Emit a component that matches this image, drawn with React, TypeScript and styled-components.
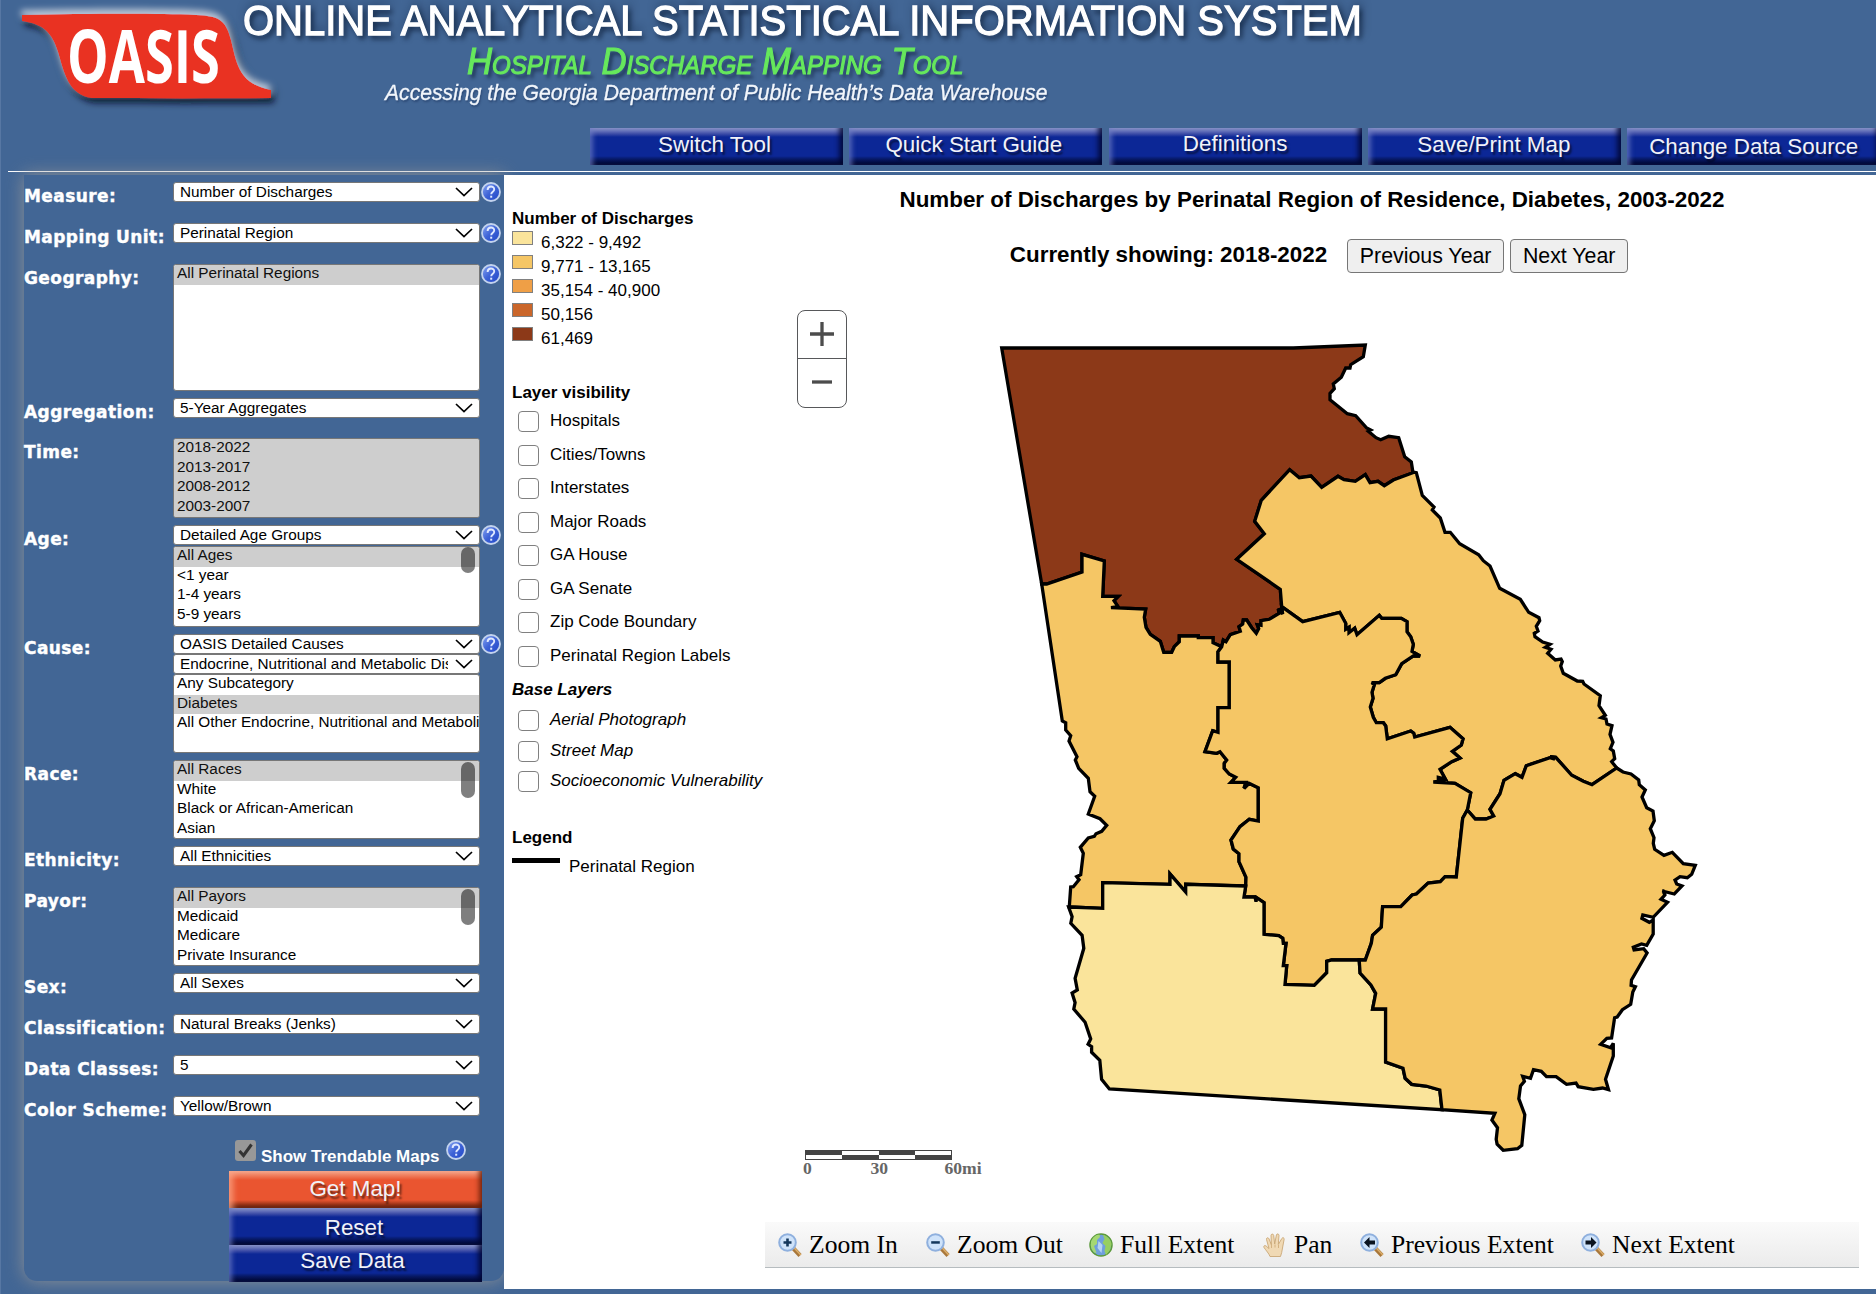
import React from 'react';
import styled, { createGlobalStyle, css } from 'styled-components';

const SANS = '"Liberation Sans", Arial, sans-serif';
const SERIF = '"Liberation Serif", "Times New Roman", serif';
const BLUE = '#426695';

const GlobalStyle = createGlobalStyle`
  *, *::before, *::after { box-sizing: border-box; }
  body { margin: 0; background: ${BLUE}; font-family: ${SANS}; color: #000; }
`;

const Page = styled.div`
  width: 1876px;
  height: 1294px;
  overflow: hidden;
  display: flex;
  flex-direction: column;
  background: ${BLUE};
  border-left: 1px solid #5777a3;
`;

/* ---------- header ---------- */

const Header = styled.header`
  height: 175px;
  flex: none;
  display: flex;
  flex-direction: column;
`;

const Brand = styled.div`
  height: 128px;
  display: flex;
`;

const Logo = styled.svg`
  width: 242px;
  height: 128px;
  flex: none;
  overflow: visible;
`;

const Titles = styled.div`
  display: flex;
  flex-direction: column;
  white-space: nowrap;
`;

const TitleLine = styled.div<{ $scale: number }>`
  transform: scaleX(${(p) => p.$scale});
  transform-origin: 0 0;
`;

const MainTitle = styled(TitleLine)`
  height: 41px;
  font-size: 43.3px;
  line-height: 41px;
  color: #fff;
  -webkit-text-stroke: 1.3px #fff;
  text-shadow: 3px 4px 6px rgba(10, 25, 50, 0.75), 2px -3px 10px rgba(10, 25, 50, 0.5);
`;

const SubTitle = styled(TitleLine)`
  height: 40px;
  margin-left: 224px;
  font-size: 36px;
  line-height: 41px;
  font-style: italic;
  font-variant: small-caps;
  color: #66e85c;
  -webkit-text-stroke: 1.1px #66e85c;
  text-shadow: 3px 4px 4px rgba(10, 25, 50, 0.7);
`;

const Tagline = styled(TitleLine)`
  height: 24px;
  margin-left: 142px;
  font-size: 21.5px;
  line-height: 25px;
  font-style: italic;
  color: #f2f6fb;
  -webkit-text-stroke: 0.3px #f2f6fb;
  text-shadow: 1px 2px 2px rgba(20, 40, 80, 0.5);
`;

const Nav = styled.nav`
  height: 43px;
  padding-left: 589px;
  display: flex;
  gap: 6.3px;
`;

const BevelButton = styled.button<{ $tone?: 'red'; $lift?: number; $left?: number }>`
  flex: none;
  display: flex;
  justify-content: center;
  align-items: flex-start;
  width: 253px;
  height: 37px;
  padding: 0 ${(p) => p.$left ?? 0}px 0 0;
  border: 0;
  font: 22.4px/${(p) => 35 - 2 * (p.$lift ?? 0)}px ${SANS};
  color: #f1f2f8;
  text-shadow: 2px 3px 2px rgba(0, 0, 0, 0.55);
  background: linear-gradient(#8c96cc 0, #6572ba 3px, #3a4aa6 6px, #0c2796 9px, #0c2796 28px, #081b6c 31px, #020a3a 37px);
  box-shadow: inset 6px 0 5px -3px rgba(110, 125, 195, 0.7), inset -5px -3px 5px -1px rgba(0, 5, 45, 0.8);
  ${(p) =>
    p.$tone === 'red' &&
    css`
      background: linear-gradient(#f5a98f 0, #f08262 4px, #ea5530 9px, #ea5530 29px, #a93a1c 33px, #64200e 37px);
      box-shadow: inset 8px 0 6px -4px rgba(250, 165, 135, 0.8), inset -5px -3px 5px -2px rgba(90, 25, 5, 0.8);
    `}
`;

const Rule = styled.div`
  height: 1px;
  margin-left: 7px;
  background: #fff;
`;

/* ---------- body ---------- */

const Body = styled.div`
  flex: none;
  display: flex;
  align-items: flex-start;
  height: 1119px;
`;

const Sidebar = styled.aside`
  flex: none;
  width: 480px;
  height: 1106px;
  margin-left: 23px;
  padding-top: 7px;
  border-radius: 0 0 13px 13px;
  background: ${BLUE};
  box-shadow: 0 0 18px rgba(150, 150, 150, 0.9);
  display: flex;
  flex-direction: column;
`;

const Field = styled.div<{ $height: number }>`
  display: grid;
  grid-template-columns: 149px 307px 22px;
  align-items: start;
  flex: none;
  height: ${(p) => p.$height}px;
`;

const Label = styled.label`
  padding-top: 5px;
  font: bold 17px/19px "DejaVu Sans", Verdana, sans-serif;
  letter-spacing: 0.42px;
  -webkit-text-stroke: 0.4px #fff;
  color: #fff;
  white-space: nowrap;
`;

const Controls = styled.div<{ $gap: number }>`
  display: flex;
  flex-direction: column;
  gap: ${(p) => p.$gap}px;
  min-width: 0;
`;

const Select = styled.div`
  display: flex;
  align-items: center;
  height: 20px;
  padding: 0 6px 0 6px;
  border: 1px solid #777;
  border-radius: 3px;
  background: #fff;
  font-size: 15.33px;
  line-height: 18px;
`;

const SelectText = styled.span`
  flex: 1;
  overflow: hidden;
  white-space: nowrap;
  margin-right: 7px;
`;

const List = styled.div<{ $height: number; $fill?: boolean }>`
  position: relative;
  height: ${(p) => p.$height}px;
  overflow: hidden;
  border: 1px solid #777;
  border-radius: 3px;
  background: ${(p) => (p.$fill ? '#cecece' : '#fff')};
`;

const Option = styled.div<{ $on?: boolean }>`
  height: 19.5px;
  padding-left: 3px;
  font-size: 15.33px;
  line-height: 16px;
  white-space: nowrap;
  color: ${(p) => (p.$on ? '#101010' : '#000')};
  background: ${(p) => (p.$on ? '#cecece' : 'transparent')};
`;

const Thumb = styled.div<{ $top: number; $height: number }>`
  position: absolute;
  right: 4px;
  top: ${(p) => p.$top}px;
  width: 14px;
  height: ${(p) => p.$height}px;
  border-radius: 7px;
  background: rgba(0, 0, 0, 0.5);
`;

const HelpSvg = styled.svg`
  width: 20px;
  height: 20px;
  margin-left: 1px;
  display: block;
`;

const TrendRow = styled.div`
  display: flex;
  align-items: flex-start;
  flex: none;
  height: 35px;
  padding-left: 211px;
`;

const TrendBox = styled.svg`
  width: 21px;
  height: 21px;
  margin-top: 4px;
`;

const TrendLabel = styled.span`
  margin: 10px 5px 0 5px;
  font: bold 17px/21px ${SANS};
  color: #fff;
`;

const TrendHelp = styled.div`
  margin-top: 4px;
`;

const Actions = styled.div`
  display: flex;
  flex-direction: column;
  padding-left: 205px;
`;

const Main = styled.main`
  flex: none;
  width: 1372px;
  height: 1114px;
  background: #fff;
  display: flex;
  position: relative;
`;

/* ---------- legend column ---------- */

const LegendColumn = styled.section`
  flex: none;
  width: 261px;
  padding: 33px 0 0 8px;
  display: flex;
  flex-direction: column;
  font-size: 17px;
  line-height: 20px;
  white-space: nowrap;
`;

const Heading = styled.h3<{ $top?: number; $italic?: boolean }>`
  margin: ${(p) => p.$top ?? 0}px 0 0;
  height: 20px;
  font-size: 17px;
  line-height: 22px;
  font-style: ${(p) => (p.$italic ? 'italic' : 'normal')};
`;

const ClassRow = styled.div`
  display: flex;
  height: 24px;
  padding-top: 3px;
`;

const Swatch = styled.span<{ $color: string }>`
  width: 21px;
  height: 14px;
  margin-right: 8px;
  border: 1px solid #808080;
  background: ${(p) => p.$color};
`;

const ClassText = styled.span`
  padding-top: 1px;
  line-height: 22px;
`;

const Layers = styled.div<{ $pitch: number; $top: number; $italic?: boolean }>`
  display: grid;
  grid-auto-rows: ${(p) => p.$pitch}px;
  margin-top: ${(p) => p.$top}px;
  padding-left: 6px;
  font-style: ${(p) => (p.$italic ? 'italic' : 'normal')};
`;

const LayerRow = styled.label`
  display: flex;
  align-items: flex-start;
  line-height: 20px;
`;

const Check = styled.span`
  width: 21px;
  height: 21px;
  margin-right: 11px;
  border: 1.4px solid #808080;
  border-radius: 4px;
  background: #fff;
`;

const LineRow = styled.div`
  display: flex;
  align-items: flex-start;
  gap: 9px;
  margin-top: 10px;
`;

const LineSample = styled.span`
  width: 48px;
  height: 5px;
  margin-top: 1px;
  background: #000;
`;

/* ---------- map column ---------- */

const MapColumn = styled.section`
  flex: none;
  width: 1094px;
  display: flex;
  flex-direction: column;
  align-items: center;
`;

const MapTitle = styled.h2`
  margin: 12px 0 0;
  font-size: 22.4px;
  line-height: 26px;
  white-space: nowrap;
`;

const YearRow = styled.div`
  display: flex;
  align-items: center;
  height: 34px;
  margin-top: 26px;
  padding-left: 20px;
`;

const YearLabel = styled.span`
  margin-right: 20px;
  font: bold 22.4px/30px ${SANS};
  padding-bottom: 2px;
  white-space: nowrap;
`;

const YearButton = styled.button<{ $width: number }>`
  width: ${(p) => p.$width}px;
  height: 34px;
  margin-right: 6px;
  padding: 0;
  border: 1px solid #767676;
  border-radius: 4px;
  background: #efefef;
  color: #000;
  font: 21.33px/30px ${SANS};
  white-space: nowrap;
`;

const MapCanvas = styled.div`
  position: relative;
  width: 1094px;
  height: 949px;
  flex: none;
`;

const MapSvg = styled.svg`
  display: block;
  width: 1094px;
  height: 949px;
`;

const ZoomControl = styled.div`
  position: absolute;
  left: 32px;
  top: 37px;
  width: 50px;
  height: 98px;
  border: 1px solid #57585a;
  border-radius: 8px;
  background: #fff;
  display: flex;
  flex-direction: column;
`;

const ZoomButton = styled.div<{ $divided?: boolean }>`
  height: ${(p) => (p.$divided ? 48 : 47)}px;
  padding-bottom: 2px;
  padding-right: 1px;
  display: flex;
  align-items: center;
  justify-content: center;
  border-bottom: ${(p) => (p.$divided ? '1px solid #57585a' : '0')};
`;

const ScaleBar = styled.div`
  position: absolute;
  left: 40px;
  top: 877px;
  width: 180px;
`;

const ScaleCells = styled.div`
  display: grid;
  grid-template-columns: repeat(4, 1fr);
  grid-auto-rows: 4px;
  width: 147px;
  border: 1px solid #444;
`;

const ScaleCell = styled.span<{ $dark: boolean }>`
  background: ${(p) => (p.$dark ? '#444' : '#fff')};
`;

const ScaleLabels = styled.div`
  display: grid;
  grid-template-columns: 67.5px 74px auto;
  margin: -1px 0 0 -2px;
  font: bold 17.6px/19px ${SERIF};
  color: #666;
`;

const Toolbar = styled.div`
  width: 1094px;
  height: 46px;
  padding-left: 13px;
  display: flex;
  align-items: center;
  background: linear-gradient(#fafafa, #ebebeb);
  border-bottom: 1px solid #b6bcbf;
  font: 25.6px/44px ${SERIF};
`;

const Tool = styled.div<{ $width: number }>`
  width: ${(p) => p.$width}px;
  display: flex;
  align-items: center;
  gap: 7px;
  white-space: nowrap;
`;

const ToolSvg = styled.svg`
  flex: none;
  width: 24px;
  height: 24px;
`;

/* ---------- map geometry: shared arcs, each with its own quantisation ---------- */

type Arc = { t: [number, number, number, number]; p: string };
const TN: Arc['t'] = [980, 330, 3, 3];
const TE: Arc['t'] = [1200, 450, 3, 3];
const TW: Arc['t'] = [1040, 540, 3, 3];
const TS: Arc['t'] = [1040, 860, 1568 / 680, 3];

const arcs: Record<string, Arc[]> = {
  north: [{ t: TN, p: '185,762 65,54 940,54 1156,45 1150,80 1112,104 1110,114 1097,114 1084,142 1060,162 1063,176 1050,190 1050,209 1102,251 1127,257 1160,294 1172,300 1165,304 1188,323 1202,329 1226,319 1256,323 1274,380 1294,396 1299,428' }],
  northEast: [{ t: TN, p: '1299,428 1240,450 1213,467 1194,454 1170,458 1156,434 1126,454 1092,449 1074,439 1025,472 993,438 958,443 929,419 844,511 824,574 853,611 770,688 901,778 905,830' }],
  northCentral: [{ t: TN, p: '905,830 908,852 895,836 897,850 868,868 843,872 843,886 832,884 836,896 829,910 815,893 800,870 790,870 788,882 777,890 781,904 751,914 738,935 730,930 725,950' }],
  northWest: [{ t: TN, p: '725,950 699,938 699,923 655,923 655,918 598,918 598,935 583,950 575,967 551,967 541,934 511,913 498,892 493,862 497,837 393,833 414,830 402,812 415,799 368,799 373,693 306,673 306,726 200,762 185,762' }],
  eastCentral: [{ t: TE, p: '245,470 308,515 419,487 437,520 437,538 447,532 447,548 464,535 471,554 538,496 545,505 604,505 621,515 621,545 632,560 640,583 636,604 660,618 640,618 605,641 587,674 556,685 538,698 515,698 523,704 516,727 519,745 511,771 520,802 529,818 550,818 557,828 562,866 632,843 641,850 644,861 750,832 789,866 784,885 757,904 780,924 755,935 720,958 736,987 715,982 715,992 736,992 700,996 765,1000 812,1028 802,1080' }],
  eastSouth: [{ t: TE, p: '802,1080 826,1107 858,1107 881,1098 870,1078 900,1031 912,991 946,971 966,982 979,947 1050,923 1065,928 1050,920 1067,922 1115,976 1150,994 1176,1004 1250,954' }],
  eastCoast: [{ t: TE, p: '639,66 649,68 667,136 702,171 697,180 721,204 735,247 751,247 779,281 836,314 850,332 870,348 899,415 961,448 986,487 1017,503 1019,512 1009,529 1014,543 1003,550 1005,560 1028,576 1050,583 1036,592 1053,598 1043,610 1066,630 1083,627 1087,635 1082,648 1090,670 1132,693 1148,694 1152,702 1201,737 1197,767 1216,796 1204,803 1218,807 1221,822 1236,827 1230,853 1239,877 1231,896 1240,903 1244,926 1235,935 1250,954' }],
  southCoast: [
    { t: TE, p: '1250,954 1269,966 1293,972 1316,990 1318,1004 1336,1020 1326,1041 1340,1073 1359,1083 1363,1112 1351,1136 1362,1163 1360,1180 1364,1198 1392,1216 1417,1207 1450,1241 1486,1246 1475,1273 1462,1283 1440,1280 1425,1290 1430,1302 1446,1308 1423,1332 1387,1323' },
    { t: TS, p: '1437,93 1441,105 1432,118 1447,127 1414,172 1390,165 1388,175 1405,187 1414,180 1414,222 1399,256 1387,252 1368,262 1370,270 1392,266 1400,279 1364,360 1363,376 1373,380 1367,396 1362,433 1343,449 1331,471 1325,473 1318,534 1307,535 1293,553 1316,563 1322,550 1322,588 1304,658 1311,689 1297,684 1276,688 1241,680 1236,669 1214,673 1190,650 1168,650 1156,634 1138,629 1131,655 1113,649 1117,664 1108,678 1104,716 1118,764 1111,856 1101,866 1068,871 1054,853 1052,838 1055,803 1042,780 1049,760 927,749' },
  ],
  southInner: [{ t: TS, p: '927,749 922,690 890,678 857,673 842,655 837,625 797,606 797,447 767,447 774,400 763,375 738,339 736,300' }],
  southCentral: [
    { t: TS, p: '736,300 750,300 764,250 767,226 787,202 790,140 832,140 858,105 868,102 895,69 923,65 934,50 960,51' },
    { t: TE, p: '769,1281 788,1105 802,1080' },
  ],
  centralSouthWest: [{ t: TW, p: '957,1260 875,1260 860,1264 860,1298 823,1336 735,1333 740,1277 730,1277 738,1210 730,1210 728,1195 716,1187 672,1183 672,1088 650,1073 648,1085 645,1071 612,1071 617,1038' }],
  westSouth: [{ t: TW, p: '617,1038 437,1033 437,1056 390,1002 390,1033 188,1028 188,1105 88,1101' }],
  westCentral: [{ t: TW, p: '617,1038 618,1012 597,965 597,941 580,927 573,900 600,860 628,838 655,843 655,743 627,730 612,745 618,727 573,727 587,712 568,702 553,685 553,670 560,660 540,635 530,640 495,635 518,572 534,577 534,503 568,503 568,366 534,366 534,335 545,320' }],
  westBorder: [{ t: TW, p: '5,132 67,543 77,548 77,570 92,587 87,603 111,650 106,660 116,685 145,715 150,755 164,769 145,822 180,836 200,856 185,874 168,881 163,889 145,894 121,922 130,940 122,1004 110,1010 117,1019 100,1040 92,1041 88,1101' }],
  southBorder: [{ t: TS, p: '66,141 74,170 71,190 97,226 101,265 81,355 86,390 74,399 81,428 78,447 104,487 117,537 111,553 119,560 119,577 138,601 142,658 160,687 927,749' }],
};

const decode = (name: string): string[] => {
  const reversed = name.startsWith('-');
  const points = arcs[reversed ? name.slice(1) : name].flatMap(({ t, p }) =>
    p.split(' ').map((pair) => {
      const [x, y] = pair.split(',').map(Number);
      return `${(t[0] + x / t[2]).toFixed(1)},${(t[1] + y / t[3]).toFixed(1)}`;
    }),
  );
  return reversed ? points.reverse() : points;
};

const regions = [
  { name: 'North', fill: '#8c3918', ring: ['north', 'northEast', 'northCentral', 'northWest'] },
  { name: 'East', fill: '#f5c665', ring: ['eastCoast', '-eastSouth', '-eastCentral', '-northEast'] },
  { name: 'West', fill: '#f5c665', ring: ['westBorder', '-westSouth', 'westCentral', 'northWest'] },
  { name: 'Central', fill: '#f5c665', ring: ['eastCentral', '-southCentral', 'centralSouthWest', 'westCentral', '-northCentral'] },
  { name: 'South West', fill: '#fae49b', ring: ['southBorder', 'southInner', 'centralSouthWest', 'westSouth'] },
  { name: 'South East', fill: '#f5c665', ring: ['southCoast', 'southInner', 'southCentral', 'eastSouth'] },
];

/* ---------- icons ---------- */

const Help = () => (
  <HelpSvg viewBox="0 0 20 20">
    <defs>
      <linearGradient id="help" x1="0" y1="0" x2="1" y2="1">
        <stop offset="0" stopColor="#8aa8f4" />
        <stop offset="0.5" stopColor="#3d62d6" />
        <stop offset="1" stopColor="#1f46c8" />
      </linearGradient>
    </defs>
    <circle cx="10" cy="10" r="9" fill="url(#help)" stroke="#c3d3ee" strokeWidth="1.8" />
    <path d="M6.600 8c0-4.600 6.800-4.400 6.600-.5-.1 2.200-3 2.300-3 4.800" fill="none" stroke="#dfe8ff" strokeWidth="1.900" />
    <rect x="9.200" y="13.700" width="2" height="2" fill="#dfe8ff" />
  </HelpSvg>
);

const Chevron = () => (
  <svg width="18" height="10" viewBox="0 0 18 10">
    <path d="M1 1l8 7.600L17 1" fill="none" stroke="#000" strokeWidth="1.700" />
  </svg>
);

type LensKind = 'in' | 'out' | 'prev' | 'next';
const lensMarks: Record<LensKind, string> = {
  in: 'M8.200 5.500h2.600V8.200h2.700v2.600h-2.700v2.700H8.200v-2.700H5.500V8.200h2.700z',
  out: 'M5.200 8.200h8.600v2.500H5.200z',
  prev: 'M4 9.500L9.500 4v3.500h5.500v4H9.500V15z',
  next: 'M15.500 9.500L10 4v3.500H4.500v4H10V15z',
};

const Lens = ({ kind }: { kind: LensKind }) => (
  <ToolSvg viewBox="0 0 24 24">
    <path d="M15.500 15.500l6.500 7" stroke="#a9773a" strokeWidth="4.200" />
    <path d="M16.300 15l6.500 7" stroke="#dcae6a" strokeWidth="1.500" />
    <circle cx="9.500" cy="9.500" r="8.300" fill="#cfe3fa" stroke="#8fb0de" strokeWidth="2" />
    <path d={lensMarks[kind]} fill={kind === 'in' || kind === 'out' ? '#14375c' : '#0b1420'} />
  </ToolSvg>
);

const Globe = () => (
  <ToolSvg viewBox="0 0 24 24">
    <circle cx="12" cy="12" r="11" fill="#6f9fdc" stroke="#5b9a3a" strokeWidth="1.500" />
    <path d="M2 9c1-4 5-7.500 8.500-7.500L11 4 8 7l0 4-3 2 2.500 7C4 20 1 15 2 9z" fill="#a5d873" />
    <path d="M14 2c4 .5 8 4.500 8.500 9L21 17l-4 5-1.500-4 1-5-3-3 2-4z" fill="#97cf60" />
    <path d="M9.500 8l4 4-1 8-4-5z" fill="#b5d4f4" />
  </ToolSvg>
);

const Hand = () => (
  <ToolSvg viewBox="0 0 24 24">
    <path
      d="M7 23.500c-1-3-4-6-6-9-.8-1.500.8-2.600 2.200-1.400L6 15.500 3.500 6.500c-.4-1.800 1.800-2.400 2.500-.7l2.400 6L8 2.500C8 .7 10.400.6 10.700 2.300l1 8.700L13.400 2c.4-1.700 2.700-1.300 2.600.5l-.7 9 3.500-6c.8-1.500 2.800-.7 2.300 1L19.500 15c-.5 3-1 6-2 8.500z"
      fill="#f0d9b4"
      stroke="#c9a776"
      strokeWidth="0.900"
    />
    <path d="M8.500 12v3M12 11.500v3M15.500 12v3" stroke="#d0ae7c" strokeWidth="0.900" />
  </ToolSvg>
);

/* ---------- data ---------- */

type Part =
  | { select: string }
  | { options: string[]; on?: number[]; height: number; thumb?: [number, number] };

const fields: { label: string; height: number; gap?: number; help?: boolean; parts: Part[] }[] = [
  { label: 'Measure:', height: 41, help: true, parts: [{ select: 'Number of Discharges' }] },
  { label: 'Mapping Unit:', height: 41, help: true, parts: [{ select: 'Perinatal Region' }] },
  { label: 'Geography:', height: 134, help: true, parts: [{ options: ['All Perinatal Regions'], on: [0], height: 127 }] },
  { label: 'Aggregation:', height: 40, parts: [{ select: '5-Year Aggregates' }] },
  { label: 'Time:', height: 87, parts: [{ options: ['2018-2022', '2013-2017', '2008-2012', '2003-2007'], on: [0, 1, 2, 3], height: 80 }] },
  { label: 'Age:', height: 109, gap: 1, help: true, parts: [{ select: 'Detailed Age Groups' }, { options: ['All Ages', '<1 year', '1-4 years', '5-9 years'], on: [0], height: 81, thumb: [0, 26] }] },
  { label: 'Cause:', height: 126, gap: 0, help: true, parts: [{ select: 'OASIS Detailed Causes' }, { select: 'Endocrine, Nutritional and Metabolic Diseases' }, { options: ['Any Subcategory', 'Diabetes', 'All Other Endocrine, Nutritional and Metabolic Diseases'], on: [1], height: 79 }] },
  { label: 'Race:', height: 86, parts: [{ options: ['All Races', 'White', 'Black or African-American', 'Asian'], on: [0], height: 79, thumb: [1, 36] }] },
  { label: 'Ethnicity:', height: 41, parts: [{ select: 'All Ethnicities' }] },
  { label: 'Payor:', height: 86, parts: [{ options: ['All Payors', 'Medicaid', 'Medicare', 'Private Insurance'], on: [0], height: 79, thumb: [1, 36] }] },
  { label: 'Sex:', height: 41, parts: [{ select: 'All Sexes' }] },
  { label: 'Classification:', height: 41, parts: [{ select: 'Natural Breaks (Jenks)' }] },
  { label: 'Data Classes:', height: 41, parts: [{ select: '5' }] },
  { label: 'Color Scheme:', height: 40, parts: [{ select: 'Yellow/Brown' }] },
];

const classes: [string, string][] = [
  ['#fae49b', '6,322 - 9,492'],
  ['#f5c665', '9,771 - 13,165'],
  ['#ef9f46', '35,154 - 40,900'],
  ['#ca662a', '50,156'],
  ['#8c3918', '61,469'],
];

const layers = ['Hospitals', 'Cities/Towns', 'Interstates', 'Major Roads', 'GA House', 'GA Senate', 'Zip Code Boundary', 'Perinatal Region Labels'];
const baseLayers = ['Aerial Photograph', 'Street Map', 'Socioeconomic Vulnerability'];

const tools = [
  { text: 'Zoom In', width: 148, icon: <Lens kind="in" /> },
  { text: 'Zoom Out', width: 163, icon: <Lens kind="out" /> },
  { text: 'Full Extent', width: 174, icon: <Globe /> },
  { text: 'Pan', width: 97, icon: <Hand /> },
  { text: 'Previous Extent', width: 221, icon: <Lens kind="prev" /> },
  { text: 'Next Extent', width: 160, icon: <Lens kind="next" /> },
];

const FieldPart = ({ part }: { part: Part }) =>
  'select' in part ? (
    <Select>
      <SelectText>{part.select}</SelectText>
      <Chevron />
    </Select>
  ) : (
    <List $height={part.height} $fill={part.on?.length === 4}>
      {part.options.map((option, i) => (
        <Option key={option} $on={part.on?.includes(i)}>
          {option}
        </Option>
      ))}
      {part.thumb && <Thumb $top={part.thumb[0]} $height={part.thumb[1]} />}
    </List>
  );

export default function App() {
  return (
    <Page>
      <GlobalStyle />
      <Header>
        <Brand>
          <Logo viewBox="1 0 242 128">
            <defs>
              <filter id="logoGlow" x="-20%" y="-30%" width="140%" height="160%">
                <feDropShadow dx="-1" dy="-5" stdDeviation="3" floodColor="#c6d2e2" floodOpacity="0.85" />
                <feDropShadow dx="3" dy="5" stdDeviation="3" floodColor="#000c20" floodOpacity="0.8" />
              </filter>
            </defs>
            <path
              d="M22 15C80 14 150 13 196 15C222 16 226 22 231 40C237 66 240 84 271 90V98C215 98.500 150 98.500 92 98C68 95 64 72 58 52C52 33 44 24 22 21Z"
              fill="#e93323"
              filter="url(#logoGlow)"
            />
            <text x="67" y="83" textLength="153" lengthAdjust="spacingAndGlyphs" fill="#fff" fontFamily='"Open Sans", "Noto Sans", sans-serif' fontWeight="700" fontSize="74">
              OASIS
            </text>
          </Logo>
          <Titles>
            <MainTitle $scale={0.924}>ONLINE ANALYTICAL STATISTICAL INFORMATION SYSTEM</MainTitle>
            <SubTitle $scale={0.963}>Hospital Discharge Mapping Tool</SubTitle>
            <Tagline $scale={0.984}>Accessing the Georgia Department of Public Health’s Data Warehouse</Tagline>
          </Titles>
        </Brand>
        <Nav>
          <BevelButton $left={4} $lift={1}>Switch Tool</BevelButton>
          <BevelButton $left={4} $lift={1}>Quick Start Guide</BevelButton>
          <BevelButton $lift={2}>Definitions</BevelButton>
          <BevelButton $left={1} $lift={1}>Save/Print Map</BevelButton>
          <BevelButton $lift={-1}>Change Data Source</BevelButton>
        </Nav>
        <Rule />
      </Header>
      <Body>
        <Sidebar>
          {fields.map((field) => (
            <Field key={field.label} $height={field.height}>
              <Label>{field.label}</Label>
              <Controls $gap={field.gap ?? 1}>
                {field.parts.map((part, i) => (
                  <FieldPart key={i} part={part} />
                ))}
              </Controls>
              {field.help && <Help />}
            </Field>
          ))}
          <TrendRow>
            <TrendBox viewBox="0 0 21 21">
              <rect width="21" height="21" rx="3" fill="#989898" />
              <path d="M4.500 11l4 4.500L16.500 4.500" fill="none" stroke="#333" strokeWidth="3" />
            </TrendBox>
            <TrendLabel>Show Trendable Maps</TrendLabel>
            <TrendHelp>
              <Help />
            </TrendHelp>
          </TrendRow>
          <Actions>
            <BevelButton $tone="red">Get Map!</BevelButton>
            <BevelButton $lift={-2} $left={3}>
              Reset
            </BevelButton>
            <BevelButton $left={6} $lift={2}>
              Save Data
            </BevelButton>
          </Actions>
        </Sidebar>
        <Main>
          <LegendColumn>
            <Heading>Number of Discharges</Heading>
            {classes.map(([color, text]) => (
              <ClassRow key={text}>
                <Swatch $color={color} />
                <ClassText>{text}</ClassText>
              </ClassRow>
            ))}
            <Heading $top={34}>Layer visibility</Heading>
            <Layers $pitch={33.55} $top={9}>
              {layers.map((name) => (
                <LayerRow key={name}>
                  <Check />
                  {name}
                </LayerRow>
              ))}
            </Layers>
            <Heading $top={0} $italic>
              Base Layers
            </Heading>
            <Layers $pitch={30.5} $top={11} $italic>
              {baseLayers.map((name) => (
                <LayerRow key={name}>
                  <Check />
                  {name}
                </LayerRow>
              ))}
            </Layers>
            <Heading $top={25}>Legend</Heading>
            <LineRow>
              <LineSample />
              Perinatal Region
            </LineRow>
          </LegendColumn>
          <MapColumn>
            <MapTitle>Number of Discharges by Perinatal Region of Residence, Diabetes, 2003-2022</MapTitle>
            <YearRow>
              <YearLabel>Currently showing: 2018-2022</YearLabel>
              <YearButton $width={157}>Previous Year</YearButton>
              <YearButton $width={118}>Next Year</YearButton>
            </YearRow>
            <MapCanvas>
              <MapSvg viewBox="765 273 1094 949">
                {regions.map((region) => (
                  <polygon
                    key={region.name}
                    points={region.ring.flatMap(decode).join(' ')}
                    fill={region.fill}
                    stroke="#000"
                    strokeWidth="3.300"
                    strokeMiterlimit="3"
                  />
                ))}
              </MapSvg>
              <ZoomControl>
                <ZoomButton $divided>
                  <svg width="24" height="24" viewBox="0 0 24 24">
                    <path d="M12 0v24M0 12h24" stroke="#4c4c4c" strokeWidth="3.300" />
                  </svg>
                </ZoomButton>
                <ZoomButton>
                  <svg width="20" height="4" viewBox="0 0 20 4">
                    <path d="M0 2h20" stroke="#4c4c4c" strokeWidth="3.300" />
                  </svg>
                </ZoomButton>
              </ZoomControl>
              <ScaleBar>
                <ScaleCells>
                  {[1, 0, 1, 0, 0, 1, 0, 1].map((dark, i) => (
                    <ScaleCell key={i} $dark={dark === 1} />
                  ))}
                </ScaleCells>
                <ScaleLabels>
                  <span>0</span>
                  <span>30</span>
                  <span>60mi</span>
                </ScaleLabels>
              </ScaleBar>
            </MapCanvas>
            <Toolbar>
              {tools.map((tool) => (
                <Tool key={tool.text} $width={tool.width}>
                  {tool.icon}
                  {tool.text}
                </Tool>
              ))}
            </Toolbar>
          </MapColumn>
        </Main>
      </Body>
    </Page>
  );
}
